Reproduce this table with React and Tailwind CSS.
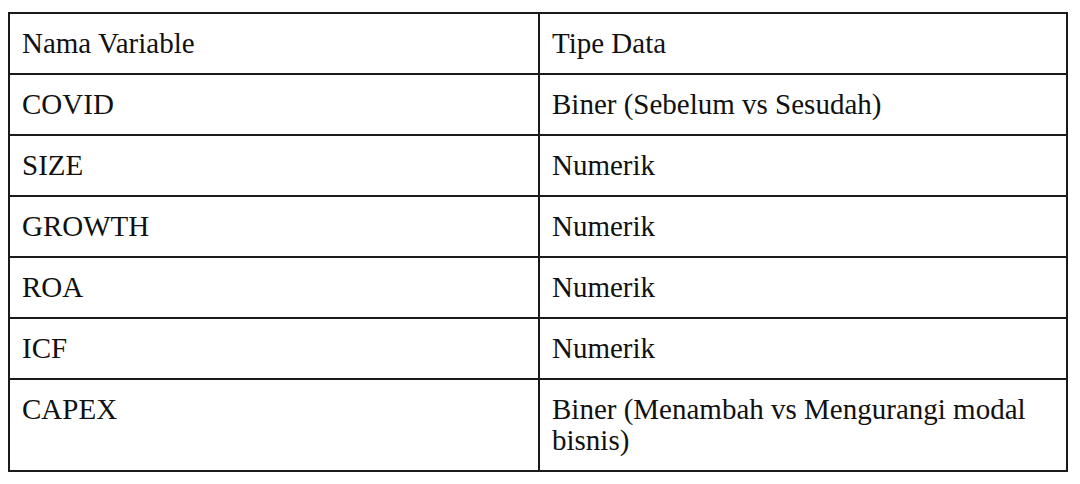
const rows = [
  ['Nama Variable', 'Tipe Data'],
  ['COVID', 'Biner (Sebelum vs Sesudah)'],
  ['SIZE', 'Numerik'],
  ['GROWTH', 'Numerik'],
  ['ROA', 'Numerik'],
  ['ICF', 'Numerik'],
  ['CAPEX', 'Biner (Menambah vs Mengurangi modal bisnis)'],
];

export default function App() {
  return (
    <div className="min-h-screen bg-white pt-3 pl-2 font-['Liberation_Serif','Times_New_Roman',serif] text-[29px] leading-[31px] text-[#111]">
      <table className="w-[1060px] table-fixed border-collapse">
        <tbody>
          {rows.map(([name, type]) => (
            <tr key={name}>
              <td className="w-[530px] border-2 border-[#1a1a1a] px-[12px] pt-[14px] pb-[14px] align-top">{name}</td>
              <td className="border-2 border-[#1a1a1a] px-[12px] pt-[14px] pb-[14px] align-top">{type}</td>
            </tr>
          ))}
        </tbody>
      </table>
    </div>
  );
}
